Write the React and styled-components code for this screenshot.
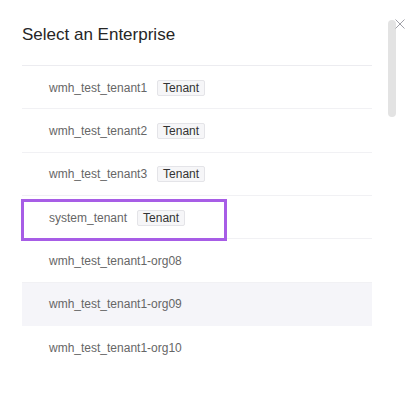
import React from "react";
import styled, { createGlobalStyle } from "styled-components";

const Global = createGlobalStyle`
  html, body { margin: 0; padding: 0; background: #ffffff; }
  body { font-family: "Liberation Sans", Arial, sans-serif; }
  * { box-sizing: border-box; }
`;

const Modal = styled.div`
  position: relative;
  width: 414px;
  height: 403px;
  overflow: hidden;
  background: #ffffff;
  padding: 23px 42px 0 22px;
`;

const Title = styled.h2`
  margin: 0 0 18px;
  font-size: 17px;
  line-height: 24px;
  font-weight: 400;
  color: #262626;
`;

const List = styled.ul`
  list-style: none;
  margin: 0;
  padding: 0;
  border-top: 1px solid #ececf0;
`;

const Row = styled.li`
  position: relative;
  display: flex;
  align-items: center;
  gap: 10px;
  height: 43.33px;
  padding: 1px 0 0 27px;
  border-bottom: 1px solid ${(p) => (p.$hover ? "#f5f5f9" : "#f1f1f4")};
  background: ${(p) => (p.$hover ? "#f5f5f9" : "transparent")};
  font-size: 12px;
  color: #666666;

  &:last-child {
    border-bottom-color: transparent;
  }
`;

const Name = styled.span`
  white-space: nowrap;
`;

const Tag = styled.span`
  display: inline-flex;
  align-items: center;
  height: 16px;
  padding: 0 5px;
  border: 1px solid #e4e4e8;
  border-radius: 2px;
  background: #f6f6f8;
  color: #333333;
  font-size: 12px;
  line-height: 14px;
`;

const Highlight = styled.div`
  position: absolute;
  left: -1px;
  top: 3px;
  width: 206px;
  height: 42px;
  border: 3px solid #a75de6;
  pointer-events: none;
`;

const Close = styled.button`
  position: absolute;
  top: 17px;
  left: 395px;
  width: 10px;
  height: 10px;
  padding: 0;
  border: 0;
  background: transparent;
  display: block;
  cursor: pointer;
`;

const ScrollThumb = styled.div`
  position: absolute;
  top: 20px;
  left: 388px;
  width: 8px;
  height: 97px;
  border-radius: 4px;
  background: #e3e3e3;
`;

const rows = [
  { name: "wmh_test_tenant1", tag: "Tenant" },
  { name: "wmh_test_tenant2", tag: "Tenant" },
  { name: "wmh_test_tenant3", tag: "Tenant" },
  { name: "system_tenant", tag: "Tenant", highlight: true },
  { name: "wmh_test_tenant1-org08" },
  { name: "wmh_test_tenant1-org09", hover: true },
  { name: "wmh_test_tenant1-org10" },
];

export default function App() {
  return (
    <>
      <Global />
      <Modal>
        <Title>Select an Enterprise</Title>
        <List>
          {rows.map((r) => (
            <Row key={r.name} $hover={r.hover}>
              <Name>{r.name}</Name>
              {r.tag && <Tag>{r.tag}</Tag>}
              {r.highlight && <Highlight />}
            </Row>
          ))}
        </List>
        <ScrollThumb />
        <Close aria-label="Close">
          <svg width="10" height="10" viewBox="0 0 10 10">
            <path d="M0.5 0.5 L9.5 9.5 M9.5 0.5 L0.5 9.5" stroke="#a0a0a8" strokeWidth="1" fill="none" />
          </svg>
        </Close>
      </Modal>
    </>
  );
}
